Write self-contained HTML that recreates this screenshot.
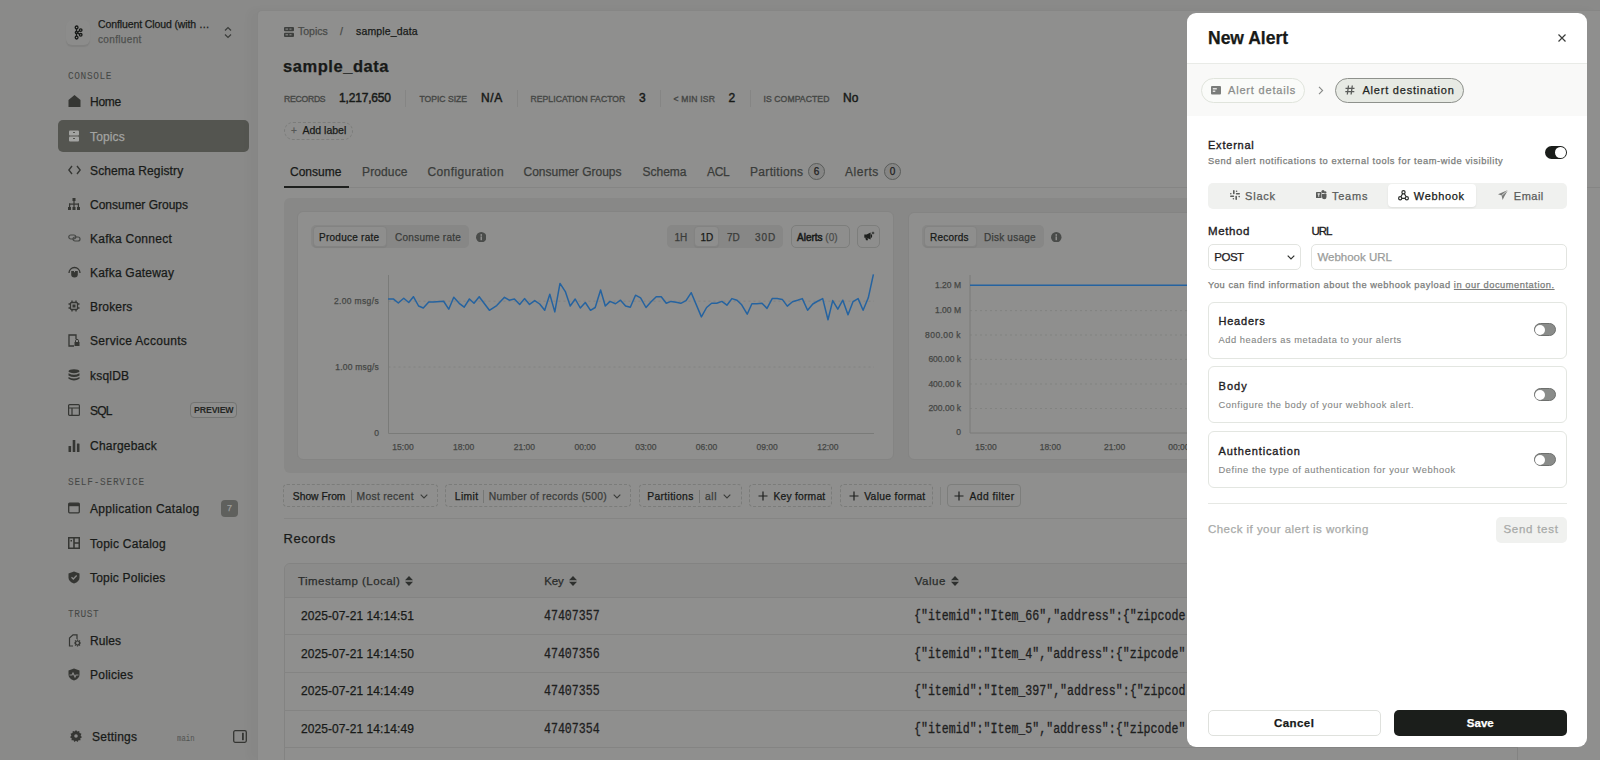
<!DOCTYPE html>
<html><head><meta charset="utf-8">
<style>
*{box-sizing:border-box;margin:0;padding:0}
html,body{width:1600px;height:760px;overflow:hidden}
body{font-family:"Liberation Sans",sans-serif;background:#8a8a89;position:relative;color:#181a18}
.a{position:absolute;white-space:nowrap}
.mono{font-family:"Liberation Mono",monospace}
svg{display:block}
/* sidebar */
.nav{position:absolute;left:68px;width:180px;height:14px;font-size:12px;color:#181a18;line-height:14px;white-space:nowrap}
.nav svg{position:absolute;left:0;top:1px}
.nav .tx{position:absolute;left:22px;top:0.8px}
.sec{-webkit-text-stroke:0;position:absolute;left:68px;font-family:"Liberation Mono",monospace;font-size:9.5px;transform:scaleY(1.2);transform-origin:0 0;letter-spacing:1.1px;color:#454745;line-height:12px}
#main{position:absolute;left:257px;top:10px;width:1343px;height:750px;background:#8f8f8e;box-shadow:-8px 0 10px rgba(0,0,0,.025);border-top-left-radius:5px;border-left:1px solid #868685;border-top:1px solid #868685;overflow:hidden}
#modal{position:absolute;left:1187px;top:13px;width:400px;height:734px;background:#fff;border-radius:9px;overflow:hidden}
.t{line-height:1.117}
.lab{font-size:8.6px;color:#454745;-webkit-text-stroke:0.35px #454745;letter-spacing:.35px}
.val{font-size:12px;color:#181a18;-webkit-text-stroke:0.45px #181a18;margin-top:0.7px}
.tab{top:165.5px;font-size:12px;color:#3a3c3a}
.badge{top:162.9px;width:17px;height:17px;border:1px solid #5a5c5a;border-radius:9px;font-size:10px;line-height:15px;text-align:center;color:#1e201e;background:#868685}
.card{background:#8f8f8e;border:1px solid #848483;border-radius:6px}
.seg{background:#878786;border-radius:5px}
.segon{background:#8e8e8d;border:1px solid #838382;border-radius:4px;box-shadow:0 1px 1px rgba(0,0,0,.05)}
.sm{font-size:10px;margin-top:0.5px}
.btn{background:#8e8e8d;border:1px solid #7d7e7c;border-radius:5px}
.info{width:10.5px;height:10.5px}
.ax{font-size:8.5px;color:#454745;margin-top:1.5px}
.xl{transform:translateX(-50%)}
.fl{top:484.5px;height:23.5px;border:1px dashed #7b7c7a;border-radius:4px;font-size:10px;line-height:21.5px;padding-left:9px;color:#181a18;white-space:nowrap}
.fl b{font-weight:normal;color:#181a18}
.fl .g{color:#3a3c3a}
.th{top:574.8px;font-size:11.5px;color:#2a2c2a}
.td{font-size:12px;color:#181a18}
.tdm{font-size:11.6px;color:#1e201e;transform:scaleY(1.2);transform-origin:0 0}
.md{color:#1e201e;-webkit-text-stroke:0.35px #1e201e;margin-top:0.4px}
.tb{top:189.8px;font-size:11px;color:#5a5c5a}
.inp{top:244.3px;height:26px;border:1px solid #e2e4e0;border-radius:5px;background:#fff}
.crd{left:1208px;width:358.5px;height:57px;border:1px solid #e3e6e1;border-radius:6px}
.sub{font-size:9.3px;color:#858785;-webkit-text-stroke:0.1px #858785;margin-top:0.4px}
.tog{left:1534px;width:22px;height:13.3px;border-radius:7px;background:#8a8c8a;border:1.2px solid #6e706e}
.knob{left:1535.2px;width:10.2px;height:10.2px;border-radius:50%;background:#fff}
.flb{top:484.3px;height:23.2px;border:1px dashed #7b7c7a;border-radius:4px}
.flt{top:490.5px;font-size:10.3px;color:#181a18}
.flt.g{color:#3a3c3a}
body{-webkit-text-stroke:0.25px currentColor}
</style></head><body>
<!-- SIDEBAR -->
<div id="side">
  <div class="a" style="left:66px;top:20px;width:24px;height:25px;background:#8c8c8b;border-radius:6px;box-shadow:0 1.5px 1px rgba(0,0,0,.07)"></div>
  <svg class="a" style="left:72px;top:24px" width="12" height="16" viewBox="0 0 12 16"><g fill="none" stroke="#181a18" stroke-width="1.3"><circle cx="4.6" cy="3.4" r="1.4"/><circle cx="8.7" cy="6.1" r="1.3"/><circle cx="8.7" cy="10.8" r="1.3"/><circle cx="4.6" cy="13.6" r="1.4"/><circle cx="4.4" cy="8.5" r="1.1"/><path d="M4.5 4.8V7.4M4.5 9.6V12.2M5.5 8.2L7.5 6.8M5.5 8.9L7.5 10.1"/></g></svg>
  <div class="a" style="left: 98px; top: 18px; font-size: 10.5px; color: rgb(24, 26, 24); line-height: 13px; letter-spacing: -0.11px;">Confluent Cloud (with …</div>
  <div class="a" style="left: 98px; top: 33px; font-size: 10px; color: rgb(78, 80, 78); line-height: 13px; letter-spacing: 0.35px;">confluent</div>
  <svg class="a" style="left:223px;top:26px" width="10" height="13" viewBox="0 0 10 13"><path d="M2 4.5L5 1.5L8 4.5M2 8.5L5 11.5L8 8.5" fill="none" stroke="#3a3c3a" stroke-width="1.2"></path></svg>
  <div class="sec" style="top: 69px; letter-spacing: 0.6px;">CONSOLE</div>

  <div class="nav" style="top:94px"><svg width="13" height="12" viewBox="0 0 13 12"><path d="M0.5 5L6.5 0L12.5 5V12H0.5Z" fill="#353633"></path></svg><span class="tx" style="letter-spacing: -0.27px;">Home</span></div>
  <div class="a" style="left:58px;top:120px;width:191px;height:32px;background:#545550;border-radius:5px"></div>
  <div class="nav" style="top:129px;color:#a3a4a2"><svg width="12" height="12" viewBox="0 0 12 12"><rect x="1" y="0.5" width="10" height="5" rx="1" fill="#a3a4a2"></rect><rect x="1" y="6.5" width="10" height="5" rx="1" fill="#a3a4a2"></rect><rect x="5" y="2" width="2" height="1" fill="#545550"></rect><rect x="5" y="8" width="2" height="1" fill="#545550"></rect></svg><span class="tx" style="letter-spacing: 0.13px;">Topics</span></div>
  <div class="nav" style="top:163px"><svg width="13" height="12" viewBox="0 0 13 12"><path d="M4 2L0.8 6L4 10M9 2L12.2 6L9 10" fill="none" stroke="#353633" stroke-width="1.4"></path></svg><span class="tx" style="letter-spacing: 0.13px;">Schema Registry</span></div>
  <div class="nav" style="top:197px"><svg width="12" height="12" viewBox="0 0 12 12"><g fill="#353633"><rect x="4.5" y="0" width="3" height="3"></rect><rect x="0" y="9" width="3" height="3"></rect><rect x="4.5" y="9" width="3" height="3"></rect><rect x="9" y="9" width="3" height="3"></rect><rect x="5.4" y="3" width="1.2" height="6"></rect><rect x="1" y="5.5" width="10" height="1.2"></rect><rect x="1" y="5.5" width="1.2" height="3.5"></rect><rect x="9.8" y="5.5" width="1.2" height="3.5"></rect></g></svg><span class="tx">Consumer Groups</span></div>
  <div class="nav" style="top:231px"><svg width="13" height="12" viewBox="0 0 13 12"><g fill="none" stroke="#454745" stroke-width="1.2"><rect x="0.8" y="3" width="7" height="4" rx="2"></rect><rect x="5" y="5" width="7" height="4" rx="2"></rect></g></svg><span class="tx" style="letter-spacing: 0.25px;">Kafka Connect</span></div>
  <div class="nav" style="top:265px"><svg width="13" height="12" viewBox="0 0 13 12"><path d="M1 7A5.5 5.5 0 0 1 12 7" fill="none" stroke="#353633" stroke-width="1.3"/><path d="M3.2 5H9.8V8.6A3.3 3 0 0 1 3.2 8.6Z" fill="#353633"/><path d="M6.5 3.5V6.2" stroke="#8a8a89" stroke-width="1"/></svg><span class="tx" style="letter-spacing: 0.22px;">Kafka Gateway</span></div>
  <div class="nav" style="top:299px"><svg width="12" height="12" viewBox="0 0 12 12"><g fill="none" stroke="#353633" stroke-width="1.3"><rect x="2.5" y="2.5" width="7" height="7" rx="1"></rect><path d="M4 0.5v2M8 0.5v2M4 9.5v2M8 9.5v2M0.5 4h2M0.5 8h2M9.5 4h2M9.5 8h2"></path></g><rect x="4.5" y="4.5" width="3" height="3" fill="#353633"></rect></svg><span class="tx" style="letter-spacing: 0.16px;">Brokers</span></div>
  <div class="nav" style="top:333px"><svg width="12" height="13" viewBox="0 0 12 13"><path d="M6 12H1V1H8V5" fill="none" stroke="#353633" stroke-width="1.3"></path><rect x="6.5" y="8" width="5" height="4" fill="#353633"></rect><path d="M7.5 8V6.8A1.5 1.5 0 0 1 10.5 6.8V8" fill="none" stroke="#353633" stroke-width="1"></path></svg><span class="tx" style="letter-spacing: 0.32px;">Service Accounts</span></div>
  <div class="nav" style="top:368px"><svg width="12" height="12" viewBox="0 0 12 12"><g fill="#353633"><ellipse cx="6" cy="2.2" rx="5.5" ry="2"></ellipse><path d="M0.5 4.2Q6 7.5 11.5 4.2V6.5Q6 9.5 0.5 6.5Z"></path><path d="M0.5 8Q6 11 11.5 8V9.8Q6 13 0.5 9.8Z"></path></g></svg><span class="tx" style="letter-spacing: 0.2px;">ksqlDB</span></div>
  <div class="nav" style="top:403px"><svg width="12" height="12" viewBox="0 0 12 12"><g fill="none" stroke="#353633" stroke-width="1.2"><rect x="0.6" y="0.6" width="10.8" height="10.8" rx="1"></rect><path d="M0.6 4H11.4M4 4V11.4"></path></g></svg><span class="tx" style="letter-spacing: -0.81px;">SQL</span></div>
  <div class="a" style="left:190.3px;top:401.5px;width:47px;height:16.5px;border:1.3px solid #737472;border-radius:4px;background:#8d8d8c"></div><div class="a t" style="left:194px;top:406.1px;font-size:8.8px;font-weight:bold;letter-spacing:-0.15px;color:#252725;-webkit-text-stroke:0">PREVIEW</div>
  <div class="nav" style="top:438px"><svg width="12" height="13" viewBox="0 0 12 13"><g fill="#353633"><rect x="0.5" y="7" width="2.6" height="6" rx=".5"></rect><rect x="4.7" y="1" width="2.6" height="12" rx=".5"></rect><rect x="8.9" y="4.5" width="2.6" height="8.5" rx=".5"></rect></g></svg><span class="tx" style="letter-spacing: 0.22px;">Chargeback</span></div>

  <div class="sec" style="top: 474.5px; letter-spacing: 0.71px;">SELF-SERVICE</div>
  <div class="nav" style="top:501px"><svg width="12" height="12" viewBox="0 0 12 12"><g fill="none" stroke="#353633" stroke-width="1.3"><rect x="0.7" y="1.2" width="10.6" height="9.6" rx="1"></rect></g><rect x="0.7" y="1.2" width="10.6" height="3" fill="#353633"></rect></svg><span class="tx" style="letter-spacing: 0.32px;">Application Catalog</span></div>
  <div class="a" style="left:221px;top:500px;width:17px;height:17px;background:#5f605d;border-radius:4px;font-size:9px;color:#9c9d9b;line-height:17px;text-align:center">7</div>
  <div class="nav" style="top:536px"><svg width="12" height="12" viewBox="0 0 12 12"><g fill="#353633"><path d="M0 0H12V12H0ZM1.5 1.5V10.5H5.2V1.5ZM6.8 1.5V5.3H10.5V1.5ZM6.8 6.8V10.5H10.5V6.8Z" fill-rule="evenodd"></path></g><rect x="2.5" y="3" width="1.5" height="1.5" fill="#353633"></rect></svg><span class="tx" style="letter-spacing: 0.25px;">Topic Catalog</span></div>
  <div class="nav" style="top:570px"><svg width="12" height="13" viewBox="0 0 12 13"><path d="M6 0.5L11.5 2.5V6.5Q11.5 10.5 6 12.5Q0.5 10.5 0.5 6.5V2.5Z" fill="#353633"></path><path d="M3.5 6.3L5.3 8L8.7 4.5" fill="none" stroke="#8a8a89" stroke-width="1.3"></path></svg><span class="tx" style="letter-spacing: 0.2px;">Topic Policies</span></div>

  <div class="sec" style="top: 607.3px; letter-spacing: 0.57px;">TRUST</div>
  <div class="nav" style="top:633px"><svg width="13" height="13" viewBox="0 0 13 13"><g fill="none" stroke="#353633" stroke-width="1.2"><path d="M5 12H1.5V4L5 0.8H9V5"></path><circle cx="9.5" cy="9" r="2"></circle><path d="M9.5 5.5v1.3M9.5 11.2v1.3M6 9h1.3M11.7 9H13M7 6.5l.9.9M11.1 10.6l.9.9M7 11.5l.9-.9M11.1 7.4l.9-.9"></path></g></svg><span class="tx" style="letter-spacing: 0.1px;">Rules</span></div>
  <div class="nav" style="top:667px"><svg width="12" height="13" viewBox="0 0 12 13"><path d="M6 0.5L11.5 2.5V6.5Q11.5 10.5 6 12.5Q0.5 10.5 0.5 6.5V2.5Z" fill="#353633"></path><path d="M1.5 7H4L5 5L7 9L8 7H10.5" fill="none" stroke="#8a8a89" stroke-width="1.2"></path></svg><span class="tx" style="letter-spacing: 0.23px;">Policies</span></div>

  <div class="nav" style="top:729px;left:70px"><svg width="12" height="12" viewBox="0 0 12 12"><path d="M6 0L7.2 1.6L9.2 1L9.5 3L11.5 3.8L10.6 5.6L12 7.2L10.3 8.3L10.5 10.3L8.5 10.3L7.6 12L6 10.8L4.4 12L3.5 10.3L1.5 10.3L1.7 8.3L0 7.2L1.4 5.6L0.5 3.8L2.5 3L2.8 1L4.8 1.6Z" fill="#353633"></path><circle cx="6" cy="6" r="1.8" fill="#8a8a89"></circle></svg><span class="tx" style="left: 22px; letter-spacing: 0.23px;">Settings</span></div>
  <div class="a mono" style="left:177px;top:732.5px;font-size:7.3px;color:#505250;line-height:10px;-webkit-text-stroke:0;transform:scaleY(1.15);transform-origin:0 0">main</div>
  <svg class="a" style="left:233px;top:730px" width="14" height="13" viewBox="0 0 14 13"><rect x="0.7" y="0.7" width="12.6" height="11.6" rx="1.5" fill="none" stroke="#353633" stroke-width="1.3"></rect><rect x="9" y="2.8" width="1.8" height="7.4" fill="#353633"></rect></svg>
</div>
<!-- MAIN -->
<div id="main"></div>

<div id="mc">
  <!-- breadcrumb -->
  <svg class="a" style="left:284px;top:27px" width="10" height="10" viewBox="0 0 10 10"><rect x="0" y="0" width="10" height="4.3" rx="1" fill="#3e403e"></rect><rect x="0" y="5.7" width="10" height="4.3" rx="1" fill="#3e403e"></rect><rect x="1.5" y="1.6" width="2.5" height="1" fill="#8f8f8e"></rect><rect x="1.5" y="7.3" width="2.5" height="1" fill="#8f8f8e"></rect><rect x="5.5" y="1.6" width="2" height="1" fill="#8f8f8e"></rect><rect x="5.5" y="7.3" width="2" height="1" fill="#8f8f8e"></rect></svg>
  <div class="a t" style="left:298px;top:26px;font-size:10.5px;color:#484a48">Topics</div>
  <div class="a t" style="left:340px;top:26px;font-size:10.5px;color:#484a48">/</div>
  <div class="a t" style="left: 356px; top: 26px; font-size: 10.5px; color: rgb(24, 26, 24); letter-spacing: 0.15px;">sample_data</div>
  <!-- title -->
  <div class="a t" style="left:283px;top:56.5px;font-size:16.5px;font-weight:bold;letter-spacing:.55px;color:#181a18">sample_data</div>
  <!-- stats -->
  <div class="a t lab" style="left: 284px; top: 94.6px; letter-spacing: -0.23px;">RECORDS</div>
  <div class="a t val" style="left: 339px; top: 91.6px; letter-spacing: -0.17px;">1,217,650</div>
  <div class="a" style="left:405px;top:90px;width:1px;height:17px;background:#858584"></div>
  <div class="a t lab" style="left: 419.5px; top: 94.6px; letter-spacing: -0.01px;">TOPIC SIZE</div>
  <div class="a t val" style="left: 481px; top: 91.6px; letter-spacing: 0.59px;">N/A</div>
  <div class="a" style="left:516.5px;top:90px;width:1px;height:17px;background:#858584"></div>
  <div class="a t lab" style="left: 530.5px; top: 94.6px; letter-spacing: 0.06px;">REPLICATION FACTOR</div>
  <div class="a t val" style="left:639px;top:91.6px">3</div>
  <div class="a" style="left:659.5px;top:90px;width:1px;height:17px;background:#858584"></div>
  <div class="a t lab" style="left: 673.5px; top: 94.6px; letter-spacing: 0.2px;">&lt; MIN ISR</div>
  <div class="a t val" style="left:728.5px;top:91.6px">2</div>
  <div class="a" style="left:750px;top:90px;width:1px;height:17px;background:#858584"></div>
  <div class="a t lab" style="left: 763.5px; top: 94.6px; letter-spacing: 0.1px;">IS COMPACTED</div>
  <div class="a t val" style="left:843px;top:91.6px">No</div>
  <!-- add label -->
  <div class="a" style="left:283.5px;top:122px;width:69px;height:18px;border:1px dashed #7b7c7a;border-radius:9px"></div>
  <div class="a t" style="left:291px;top:125px;font-size:10px;color:#555755">+</div>
  <div class="a t" style="left:302.5px;top:124.5px;font-size:10.5px;color:#181a18">Add label</div>
  <!-- tabs -->
  <div class="a" style="left:284px;top:186.7px;width:1316px;height:1px;background:#858584"></div>
  <div class="a t tab" style="left:290px;color:#181a18">Consume</div>
  <div class="a" style="left:284px;top:185.6px;width:65px;height:2px;background:#1e201e"></div>
  <div class="a t tab" style="left: 362px; letter-spacing: 0.13px;">Produce</div>
  <div class="a t tab" style="left: 427.5px; letter-spacing: 0.39px;">Configuration</div>
  <div class="a t tab" style="left:523.5px">Consumer Groups</div>
  <div class="a t tab" style="left:642.5px">Schema</div>
  <div class="a t tab" style="left: 707px; letter-spacing: -0.37px;">ACL</div>
  <div class="a t tab" style="left: 750px; letter-spacing: 0.33px;">Partitions</div>
  <div class="a badge" style="left:808px">6</div>
  <div class="a t tab" style="left: 845px; letter-spacing: 0.54px;">Alerts</div>
  <div class="a badge" style="left:884px">0</div>

  <!-- charts container -->
  <div class="a" style="left:284px;top:197.5px;width:1234px;height:275.5px;background:#888887;border-radius:6px"></div>
  <div class="a card" style="left:297px;top:211px;width:597px;height:249px"></div>
  <div class="a card" style="left:908px;top:211.5px;width:597px;height:248.5px"></div>

  <!-- card 1 controls -->
  <div class="a seg" style="left:311px;top:225px;width:158px;height:23px"></div>
  <div class="a segon" style="left:312.5px;top:226px;width:74px;height:21px"></div>
  <div class="a t sm" style="left: 319px; top: 231px; color: rgb(24, 26, 24); letter-spacing: 0.26px;">Produce rate</div>
  <div class="a t sm" style="left: 395px; top: 231px; color: rgb(58, 60, 58); letter-spacing: 0.28px;">Consume rate</div>
  <div class="a info" style="left:475.5px;top:231.5px"><svg width="10.5" height="10.5" viewBox="0 0 10.5 10.5"><circle cx="5.25" cy="5.25" r="5.25" fill="#4a4c4a"/><circle cx="5.25" cy="3" r="0.9" fill="#8f8f8e"/><rect x="4.5" y="4.4" width="1.5" height="3.8" fill="#8f8f8e"/></svg></div>
  <div class="a seg" style="left:666.5px;top:225px;width:116px;height:23px"></div>
  <div class="a segon" style="left:694px;top:226px;width:25px;height:21px"></div>
  <div class="a t sm" style="left:674.5px;top:231px;color:#3a3c3a">1H</div>
  <div class="a t sm" style="left:700.5px;top:231px;color:#181a18">1D</div>
  <div class="a t sm" style="left:727px;top:231px;color:#3a3c3a">7D</div>
  <div class="a t sm" style="left: 755px; top: 231px; color: rgb(58, 60, 58); letter-spacing: 0.92px;">30D</div>
  <div class="a btn" style="left:790.5px;top:225px;width:59.5px;height:23px"></div>
  <div class="a t sm" style="left:797px;top:231px;color:#181a18"><b style="font-weight:normal;-webkit-text-stroke:0.5px #181a18">Alerts</b> <span style="color:#4a4c4a">(0)</span></div>
  <div class="a btn" style="left:856.5px;top:225px;width:23.5px;height:23px"></div>
  <svg class="a" style="left:863.5px;top:231px" width="11" height="10" viewBox="0 0 11 10"><path d="M0.3 3.6H2.6L6.6 1.6V8.6L2.6 6.8H0.3Z" fill="#1e201e"/><path d="M1.2 6.5L2 9.3H4L3.5 6.8" fill="#1e201e"/><path d="M7 3.5Q8.3 5.1 7 6.7" fill="none" stroke="#1e201e" stroke-width="1.2"/><path d="M9 0.2L9.5 1.5L10.8 2L9.5 2.5L9 3.8L8.5 2.5L7.2 2L8.5 1.5Z" fill="#1e201e"/></svg>

  <!-- chart 1 -->
  <svg class="a" style="left:297px;top:211px" width="597" height="249" viewBox="297 211 597 249">
    <line x1="388.5" y1="301.2" x2="874" y2="301.2" stroke="#7f807e" stroke-width="0.8" stroke-dasharray="2 3"></line>
    <line x1="388.5" y1="367" x2="874" y2="367" stroke="#7f807e" stroke-width="0.8" stroke-dasharray="2 3"></line>
    <line x1="388.5" y1="275" x2="388.5" y2="433.5" stroke="#7a7b79" stroke-width="1"></line>
    <line x1="388.5" y1="433.5" x2="874" y2="433.5" stroke="#7a7b79" stroke-width="1"></line>
    <polyline points="388.1,299.1 393.6,299.1 398.3,303 403.75,298.3 408.75,302.5 413.4,296.7 418.6,306 423.3,308 428.75,302 433.4,302 443.6,301.25 448.75,309.2 453.75,297.3 459.2,303.3 464.2,307.2 469.4,299 474,303.3 479.2,296.7 489.4,310.3 496.7,305.6 504.5,297.3 509.2,300.2 514.4,299 519.7,304.5 524.5,298.6 529.5,304.4 534.7,300.6 539.7,304 544.7,310.3 549.8,294.2 554.8,311.9 560,283.4 565.5,291.9 570.2,306 575.2,299 580.3,308 585.3,302.5 590.5,310.3 595.2,307.5 600.6,290 605.3,306 610,301.4 615.5,303.75 620.5,300.2 625.6,306 630.3,307.2 635.5,295.2 640.6,297.8 646,307.5 651.1,301.7 656.25,296.7 661.25,296.7 666.25,303.3 671,301.4 676.1,302.2 680.8,303.3 686,300.6 691.25,292.7 701.4,316.9 706.6,307.5 711.6,303.3 716.7,303.3 721.9,301.4 726.9,305.2 731.9,298.6 737,300.2 741.7,304.8 747.2,314.2 751.9,303.75 756.9,303.75 762,303.3 767,308.4 772.2,298.6 777.2,298.6 782.3,299.4 787.3,306.1 792.5,301.7 797.5,300.2 802.3,298.6 807.6,310.3 812.8,304 817.5,301.25 822.7,298.6 828,319.7 832.7,300.6 837.8,309.2 842.8,300.2 848,314.7 853,301.7 858.1,298.6 863.1,310.3 868.3,297.8 873.4,274.4" fill="none" stroke="#2563a0" stroke-width="1.5" stroke-linejoin="round"></polyline>
  </svg>
  <div class="a t ax" style="left: 300px; width: 79px; text-align: right; top: 295px; letter-spacing: 0.35px;">2.00 msg/s</div>
  <div class="a t ax" style="left: 300px; width: 79px; text-align: right; top: 361px; letter-spacing: 0.22px;">1.00 msg/s</div>
  <div class="a t ax" style="left:300px;width:79px;text-align:right;top:427.5px">0</div>
  <div class="a t ax xl" style="left:403px;top:441.5px">15:00</div>
  <div class="a t ax xl" style="left:463.7px;top:441.5px">18:00</div>
  <div class="a t ax xl" style="left:524.4px;top:441.5px">21:00</div>
  <div class="a t ax xl" style="left:585.1px;top:441.5px">00:00</div>
  <div class="a t ax xl" style="left:645.8px;top:441.5px">03:00</div>
  <div class="a t ax xl" style="left:706.5px;top:441.5px">06:00</div>
  <div class="a t ax xl" style="left:767.2px;top:441.5px">09:00</div>
  <div class="a t ax xl" style="left:827.9px;top:441.5px">12:00</div>

  <!-- card 2 -->
  <div class="a seg" style="left:922px;top:225px;width:122px;height:23px"></div>
  <div class="a segon" style="left:923.5px;top:226px;width:53px;height:21px"></div>
  <div class="a t sm" style="left: 930px; top: 231px; color: rgb(24, 26, 24); letter-spacing: 0.21px;">Records</div>
  <div class="a t sm" style="left: 984px; top: 231px; color: rgb(58, 60, 58); letter-spacing: 0.23px;">Disk usage</div>
  <div class="a info" style="left:1051px;top:231.5px"><svg width="10.5" height="10.5" viewBox="0 0 10.5 10.5"><circle cx="5.25" cy="5.25" r="5.25" fill="#4a4c4a"/><circle cx="5.25" cy="3" r="0.9" fill="#8f8f8e"/><rect x="4.5" y="4.4" width="1.5" height="3.8" fill="#8f8f8e"/></svg></div>
  <svg class="a" style="left:908px;top:211px" width="597" height="249" viewBox="908 211 597 249">
    <g stroke="#7f807e" stroke-width="0.8" stroke-dasharray="2 3">
    <line x1="970" y1="310.6" x2="1505" y2="310.6"></line><line x1="970" y1="335" x2="1505" y2="335"></line><line x1="970" y1="359.4" x2="1505" y2="359.4"></line><line x1="970" y1="384" x2="1505" y2="384"></line><line x1="970" y1="408.5" x2="1505" y2="408.5"></line>
    </g>
    <line x1="970" y1="275" x2="970" y2="433" stroke="#7a7b79" stroke-width="1"></line>
    <line x1="970" y1="433" x2="1505" y2="433" stroke="#7a7b79" stroke-width="1"></line>
    <line x1="970" y1="285.2" x2="1505" y2="285.2" stroke="#2563a0" stroke-width="1.5"></line>
  </svg>
  <div class="a t ax" style="left:912px;width:49px;text-align:right;top:279.5px">1.20 M</div>
  <div class="a t ax" style="left:912px;width:49px;text-align:right;top:304.5px">1.00 M</div>
  <div class="a t ax" style="left: 912px; width: 49px; text-align: right; top: 329px; letter-spacing: 0.41px;">800.00 k</div>
  <div class="a t ax" style="left:912px;width:49px;text-align:right;top:353.5px">600.00 k</div>
  <div class="a t ax" style="left:912px;width:49px;text-align:right;top:378px">400.00 k</div>
  <div class="a t ax" style="left:912px;width:49px;text-align:right;top:402.5px">200.00 k</div>
  <div class="a t ax" style="left:912px;width:49px;text-align:right;top:426.5px">0</div>
  <div class="a t ax xl" style="left:986px;top:441.5px">15:00</div>
  <div class="a t ax xl" style="left:1050.3px;top:441.5px">18:00</div>
  <div class="a t ax xl" style="left:1114.6px;top:441.5px">21:00</div>
  <div class="a t ax xl" style="left:1178.9px;top:441.5px">00:00</div>
</div>

<div id="tbl">
  <div class="a flb" style="left:283.4px;width:154.6px"></div>
  <div class="a t flt" style="left:292.8px;letter-spacing:0px">Show From</div>
  <div class="a" style="left:350.5px;top:489.5px;width:1px;height:13px;background:#767775"></div>
  <div class="a t flt g" style="left: 356.5px; letter-spacing: 0.32px;">Most recent</div>
  <svg class="a" style="left:420px;top:493.5px" width="8" height="5" viewBox="0 0 8 5"><path d="M0.7 0.7L4 4L7.3 0.7" fill="none" stroke="#3a3c3a" stroke-width="1.1"></path></svg>
  <div class="a flb" style="left:445.4px;width:186px"></div>
  <div class="a t flt" style="left: 454.8px; letter-spacing: 0.39px;">Limit</div>
  <div class="a" style="left:483.2px;top:489.5px;width:1px;height:13px;background:#767775"></div>
  <div class="a t flt g" style="left: 488.8px; letter-spacing: 0.26px;">Number of records (500)</div>
  <svg class="a" style="left:613.3px;top:493.5px" width="8" height="5" viewBox="0 0 8 5"><path d="M0.7 0.7L4 4L7.3 0.7" fill="none" stroke="#3a3c3a" stroke-width="1.1"></path></svg>
  <div class="a flb" style="left:638.6px;width:103px"></div>
  <div class="a t flt" style="left: 647.3px; letter-spacing: 0.34px;">Partitions</div>
  <div class="a" style="left:699px;top:489.5px;width:1px;height:13px;background:#767775"></div>
  <div class="a t flt g" style="left: 704.9px; letter-spacing: 0.64px;">all</div>
  <svg class="a" style="left:723px;top:493.5px" width="8" height="5" viewBox="0 0 8 5"><path d="M0.7 0.7L4 4L7.3 0.7" fill="none" stroke="#3a3c3a" stroke-width="1.1"></path></svg>
  <div class="a flb" style="left:748.5px;width:83.5px"></div>
  <svg class="a" style="left:757.5px;top:490.8px" width="10" height="10" viewBox="0 0 10 10"><path d="M5 0.5V9.5M0.5 5H9.5" stroke="#1e201e" stroke-width="1.2"></path></svg>
  <div class="a t flt" style="left: 773.5px; letter-spacing: 0.21px;">Key format</div>
  <div class="a flb" style="left:839.8px;width:93px"></div>
  <svg class="a" style="left:848.8px;top:490.8px" width="10" height="10" viewBox="0 0 10 10"><path d="M5 0.5V9.5M0.5 5H9.5" stroke="#1e201e" stroke-width="1.2"></path></svg>
  <div class="a t flt" style="left: 864.2px; letter-spacing: 0.31px;">Value format</div>
  <div class="a flb" style="left:947.3px;width:73.7px;border-style:solid;border-color:#7d7e7c"></div>
  <svg class="a" style="left:954px;top:490.8px" width="10" height="10" viewBox="0 0 10 10"><path d="M5 0.5V9.5M0.5 5H9.5" stroke="#1e201e" stroke-width="1.2"></path></svg>
  <div class="a t flt" style="left: 969.4px; letter-spacing: 0.46px;">Add filter</div>
  <div class="a" style="left:940px;top:487px;width:1px;height:18px;background:#80817f"></div>
  <div class="a" style="left:284px;top:518px;width:1234px;height:1px;background:#858584"></div>
  <div class="a t" style="left: 283.5px; top: 532px; font-size: 13px; color: rgb(24, 26, 24); letter-spacing: 0.55px;">Records</div>
  <div class="a" style="left:283.5px;top:563px;width:1234px;height:220px;border:1px solid #838382;border-radius:6px;background:#8f8f8e;overflow:hidden">
    <div style="position:absolute;left:0;top:0;width:100%;height:33.5px;background:#8b8b8a;border-bottom:1px solid #838382"></div>
  </div>
  <div class="a t th" style="left: 298px; letter-spacing: 0.44px;">Timestamp (Local)</div>
  <svg class="a" style="left:405.3px;top:575.8px" width="8" height="10" viewBox="0 0 8 10"><path d="M4 0L8 4.2H0ZM4 10L8 5.8H0Z" fill="#2e302e"></path></svg>
  <div class="a t th" style="left: 544.3px; letter-spacing: -0.21px;">Key</div>
  <svg class="a" style="left:569.2px;top:575.8px" width="8" height="10" viewBox="0 0 8 10"><path d="M4 0L8 4.2H0ZM4 10L8 5.8H0Z" fill="#2e302e"></path></svg>
  <div class="a t th" style="left: 914.7px; letter-spacing: 0.51px;">Value</div>
  <svg class="a" style="left:951px;top:575.8px" width="8" height="10" viewBox="0 0 8 10"><path d="M4 0L8 4.2H0ZM4 10L8 5.8H0Z" fill="#2e302e"></path></svg>
  <div class="a t td" style="left:301px;top:610px;letter-spacing:0.08px">2025-07-21 14:14:51</div>
  <div class="a t mono tdm" style="left:544px;top:609.3px">47407357</div>
  <div class="a t mono tdm" style="left:914px;top:609.3px">{"itemid":"Item_66","address":{"zipcode</div>
  <div class="a" style="left:284px;top:634.3px;width:1234px;height:1px;background:#848483"></div>
  <div class="a t td" style="left:301px;top:647.5px;letter-spacing:0.08px">2025-07-21 14:14:50</div>
  <div class="a t mono tdm" style="left:544px;top:646.8px">47407356</div>
  <div class="a t mono tdm" style="left:914px;top:646.8px">{"itemid":"Item_4","address":{"zipcode"</div>
  <div class="a" style="left:284px;top:672.0px;width:1234px;height:1px;background:#848483"></div>
  <div class="a t td" style="left:301px;top:685.1px;letter-spacing:0.08px">2025-07-21 14:14:49</div>
  <div class="a t mono tdm" style="left:544px;top:684.4px">47407355</div>
  <div class="a t mono tdm" style="left:914px;top:684.4px">{"itemid":"Item_397","address":{"zipcod</div>
  <div class="a" style="left:284px;top:709.7px;width:1234px;height:1px;background:#848483"></div>
  <div class="a t td" style="left:301px;top:722.6px;letter-spacing:0.08px">2025-07-21 14:14:49</div>
  <div class="a t mono tdm" style="left:544px;top:721.9px">47407354</div>
  <div class="a t mono tdm" style="left:914px;top:721.9px">{"itemid":"Item_5","address":{"zipcode"</div>
  <div class="a" style="left:284px;top:747.0px;width:1234px;height:1px;background:#848483"></div>
</div>
<!-- MODAL -->
<div id="modal"></div>

<div id="mod">
  <div class="a t" style="left:1208px;top:28.6px;font-size:17.5px;font-weight:bold;color:#181a18">New Alert</div>
  <svg class="a" style="left:1557.5px;top:34.3px" width="8" height="8" viewBox="0 0 8 8"><path d="M0.5 0.5L7.5 7.5M7.5 0.5L0.5 7.5" stroke="#3a3c3a" stroke-width="1.2"></path></svg>
  <div class="a" style="left:1187px;top:63px;width:400px;height:53px;background:#f9f9f8;border-top:1px solid #e9ebe7"></div>
  <div class="a" style="left:1201px;top:77.5px;width:103.5px;height:25px;border:1px solid #e0e4dc;border-radius:13px;background:#fafbf9"></div>
  <svg class="a" style="left:1211px;top:86px" width="10" height="8.5" viewBox="0 0 10 8.5"><rect x="0" y="0" width="10" height="8.5" rx="1" fill="#7a7c7a"></rect><rect x="1.8" y="2.2" width="4" height="1.2" fill="#fafbf9"></rect><rect x="1.8" y="4.6" width="2.5" height="1.2" fill="#fafbf9"></rect></svg>
  <div class="a t" style="left: 1228px; top: 84px; font-size: 11px; color: rgb(138, 140, 138); letter-spacing: 0.82px;">Alert details</div>
  <svg class="a" style="left:1317.5px;top:86px" width="6" height="9" viewBox="0 0 6 9"><path d="M1 0.8L4.6 4.5L1 8.2" fill="none" stroke="#888a88" stroke-width="1.1"></path></svg>
  <div class="a" style="left:1335px;top:77.5px;width:128.5px;height:25px;border:1px solid #8e918c;border-radius:13px;background:#e7eae4"></div>
  <svg class="a" style="left:1345px;top:85px" width="10" height="10" viewBox="0 0 10 10"><path d="M3.5 0.5L2.3 9.5M7.3 0.5L6.1 9.5M0.5 3.3H9.5M0.3 6.7H9.3" stroke="#5a5c5a" stroke-width="1.3"></path></svg>
  <div class="a t" style="left: 1362.5px; top: 84px; font-size: 11px; color: rgb(35, 37, 35); font-weight: normal; letter-spacing: 0.78px;">Alert destination</div>

  <div class="a t md" style="left: 1208px; top: 138.3px; font-size: 11px; letter-spacing: 0.78px;">External</div>
  <div class="a t" style="left: 1208px; top: 155.5px; font-size: 9.3px; color: rgb(122, 124, 122); letter-spacing: 0.59px;">Send alert notifications to external tools for team-wide visibility</div>
  <div class="a" style="left:1545px;top:146px;width:22px;height:13px;border-radius:7px;background:#1a1d1a"></div>
  <div class="a" style="left:1555.2px;top:147.3px;width:10.4px;height:10.4px;border-radius:50%;background:#fff"></div>

  <div class="a" style="left:1208px;top:183px;width:358.5px;height:25.5px;border-radius:5px;background:#f0f1ef"></div>
  <div class="a" style="left:1388px;top:184.4px;width:87.7px;height:22.5px;border-radius:4px;background:#fff;box-shadow:0 1px 2px rgba(0,0,0,.08)"></div>
  <svg class="a" style="left:1229.5px;top:190.3px" width="10" height="10" viewBox="0 0 10 10"><g fill="#5a5c5a"><rect x="3" y="0" width="1.6" height="4.2" rx=".8"></rect><rect x="5.8" y="0.5" width="1.6" height="1.6" rx=".8"></rect><rect x="5.8" y="3" width="4.2" height="1.6" rx=".8"></rect><rect x="0" y="5.4" width="4.2" height="1.6" rx=".8"></rect><rect x="5.4" y="5.8" width="1.6" height="4.2" rx=".8"></rect><rect x="2.6" y="7.9" width="1.6" height="1.6" rx=".8"></rect><rect x="0" y="3" width="1.6" height="1.6" rx=".8"></rect><rect x="8.4" y="5.8" width="1.6" height="1.6" rx=".8"></rect></g></svg>
  <div class="a t tb" style="left: 1245px; letter-spacing: 0.8px;">Slack</div>
  <svg class="a" style="left:1316.4px;top:190px" width="10.5" height="9.5" viewBox="0 0 10.5 9.5"><g fill="#5a5c5a"><rect x="0" y="2" width="5.5" height="6" rx=".6"></rect><circle cx="7" cy="1.6" r="1.6"></circle><circle cx="9.2" cy="2.4" r="1.2"></circle><path d="M6 4H10.5V7A2 2 0 0 1 6 7Z"></path></g><rect x="1.5" y="3.5" width="2.5" height="0.9" fill="#f0f1ef"></rect><rect x="2.3" y="3.5" width="0.9" height="3.3" fill="#f0f1ef"></rect></svg>
  <div class="a t tb" style="left: 1332px; letter-spacing: 0.75px;">Teams</div>
  <svg class="a" style="left:1398.3px;top:189.5px" width="11" height="11" viewBox="0 0 11 11"><g fill="none" stroke="#2e302e" stroke-width="1.2"><circle cx="5.5" cy="2.3" r="1.6"></circle><circle cx="2.2" cy="8.3" r="1.6"></circle><circle cx="8.8" cy="8.3" r="1.6"></circle><path d="M4.6 3.8L2.8 6.7M6.4 3.8L8 6.5M3.8 8.3H7"></path></g></svg>
  <div class="a t tb" style="left: 1413.8px; color: rgb(24, 26, 24); letter-spacing: 0.67px;">Webhook</div>
  <svg class="a" style="left:1498.3px;top:190px" width="10" height="10" viewBox="0 0 10 10"><path d="M10 0L0 4.2L3.6 5.6L4.6 10L6.3 6.6L10 0Z" fill="#7a7c7a"></path><path d="M10 0L3.6 5.6" stroke="#f0f1ef" stroke-width=".8"></path></svg>
  <div class="a t tb" style="left: 1513.8px; letter-spacing: 0.5px;">Email</div>

  <div class="a t md" style="left: 1208px; top: 224.4px; font-size: 11.5px; letter-spacing: 0.61px;">Method</div>
  <div class="a t md" style="left: 1311.5px; top: 224.4px; font-size: 11.5px; letter-spacing: -1.01px;">URL</div>
  <div class="a inp" style="left:1207.5px;width:93px"></div>
  <div class="a t" style="left: 1214.3px; top: 250.5px; font-size: 11.5px; color: rgb(30, 32, 30); letter-spacing: -0.5px;">POST</div>
  <svg class="a" style="left:1286.5px;top:254.5px" width="8" height="5" viewBox="0 0 8 5"><path d="M0.7 0.7L4 4L7.3 0.7" fill="none" stroke="#2e302e" stroke-width="1.2"></path></svg>
  <div class="a inp" style="left:1311px;width:255.5px"></div>
  <div class="a t" style="left:1317.4px;top:250.5px;font-size:11.5px;color:#9a9c9a">Webhook URL</div>
  <div class="a t" style="left: 1208px; top: 280.2px; font-size: 9.3px; color: rgb(122, 124, 122); letter-spacing: 0.54px;">You can find information about the webhook payload <span style="text-decoration:underline">in our documentation.</span></div>

  <div class="a crd" style="top:301.6px"></div>
  <div class="a t md" style="left: 1218.5px; top: 314.5px; font-size: 11px; letter-spacing: 0.77px;">Headers</div>
  <div class="a t sub" style="left: 1218.5px; top: 334.5px; letter-spacing: 0.54px;">Add headers as metadata to your alerts</div>
  <div class="a tog" style="top:323.2px"></div><div class="a knob" style="top:324.8px"></div>
  <div class="a crd" style="top:366.4px"></div>
  <div class="a t md" style="left: 1218.5px; top: 379.4px; font-size: 11px; letter-spacing: 1.07px;">Body</div>
  <div class="a t sub" style="left: 1218.5px; top: 399.4px; letter-spacing: 0.56px;">Configure the body of your webhook alert.</div>
  <div class="a tog" style="top:388.1px"></div><div class="a knob" style="top:389.7px"></div>
  <div class="a crd" style="top:431.3px"></div>
  <div class="a t md" style="left: 1218.5px; top: 444.3px; font-size: 11px; letter-spacing: 0.89px;">Authentication</div>
  <div class="a t sub" style="left: 1218.5px; top: 464.3px; letter-spacing: 0.56px;">Define the type of authentication for your Webhook</div>
  <div class="a tog" style="top:453px"></div><div class="a knob" style="top:454.6px"></div>

  <div class="a" style="left:1208px;top:502.5px;width:358.5px;height:1px;background:#e6e8e4"></div>
  <div class="a t" style="left: 1208px; top: 523px; font-size: 11.5px; color: rgb(168, 170, 168); letter-spacing: 0.46px;">Check if your alert is working</div>
  <div class="a" style="left:1495.5px;top:516.7px;width:71px;height:26.6px;border-radius:5px;background:#f0f1ef"></div>
  <div class="a t" style="left: 1495.5px; width: 71px; text-align: center; top: 523px; font-size: 11.5px; color: rgb(168, 170, 168); letter-spacing: 0.74px;">Send test</div>

  <div class="a" style="left:1207.7px;top:710.3px;width:173px;height:26px;border-radius:5px;border:1px solid #dfe1dd;background:#fff"></div>
  <div class="a t" style="left: 1207.7px; width: 173px; text-align: center; top: 716.8px; font-size: 11.5px; font-weight: bold; color: rgb(24, 26, 24); letter-spacing: 0.42px;">Cancel</div>
  <div class="a" style="left:1394px;top:710.3px;width:172.6px;height:26px;border-radius:5px;background:#1b1e1b"></div>
  <div class="a t" style="left:1394px;width:172.6px;text-align:center;top:716.8px;font-size:11.5px;font-weight:bold;color:#fff">Save</div>
</div>

</body></html>
